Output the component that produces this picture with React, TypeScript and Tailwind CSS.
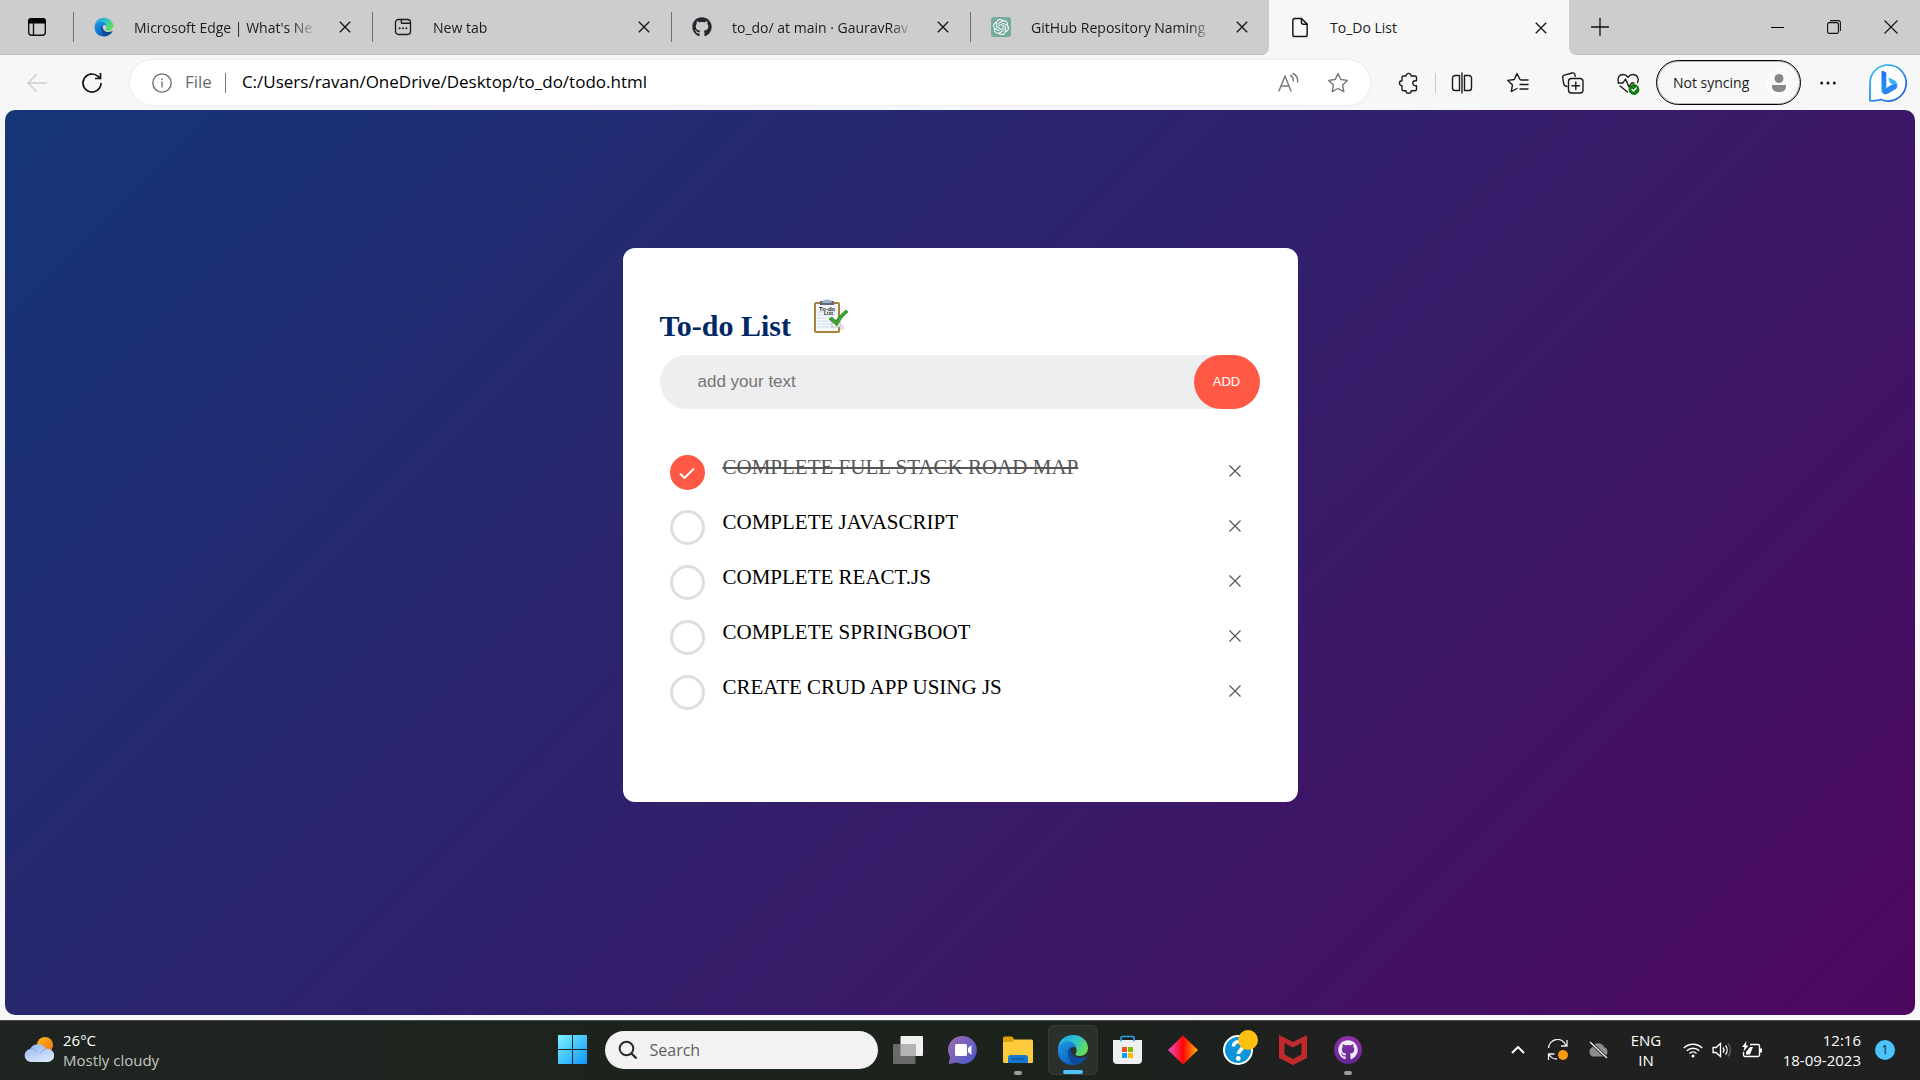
import React, { useState } from "react";
import { SiOpenai } from "react-icons/si";
import { FaGithub } from "react-icons/fa";

type IconProps = { className?: string };

function Stroke({ className = "size-6", children, w = 1.4 }: { className?: string; children: React.ReactNode; w?: number }) {
  return (
    <svg viewBox="0 0 24 24" fill="none" stroke="currentColor" strokeWidth={w} strokeLinecap="round" strokeLinejoin="round" className={className} aria-hidden="true">
      {children}
    </svg>
  );
}

function EdgeLogo({ className = "", id }: IconProps & { id: string }) {
  return (
    <svg viewBox="0 0 32 32" className={className} aria-hidden="true">
      <defs>
        <linearGradient id={id + "a"} x1="0" y1="0.2" x2="1" y2="0.7">
          <stop offset="0" stopColor="#1fa6e8" />
          <stop offset="0.5" stopColor="#2fc3c9" />
          <stop offset="1" stopColor="#6de04b" />
        </linearGradient>
        <linearGradient id={id + "b"} x1="0" y1="0" x2="0.6" y2="1">
          <stop offset="0" stopColor="#1f9ae6" />
          <stop offset="1" stopColor="#0b62c0" />
        </linearGradient>
      </defs>
      <path d="M1 14C2 6 8 1 16 1c9 0 15 6 15 13 0 5-4 8-8 8-3 0-5-1-4.500-2 1.500-2 1.500-4 .5-6C17 10 10 8 1 14Z" fill={`url(#${id}a)`} />
      <path d="M1 15c1-5 5-7.500 10-7.500 5 0 8 3.500 8.500 6.500-2-2-6-1-7.500 2-2 4 0 10 6 15C8 32 0 25 1 15Z" fill={`url(#${id}b)`} />
      <path d="M11 18c0-2 1-4 3-5-1 5 2 11 9 11 2.500 0 4.500-.6 6-1.500.6-.3 1 .1.700.700C27 28 22 31 17 31c-4-2-6-8-6-13Z" fill="#0c4a9b" />
    </svg>
  );
}

const ClosedX = ({ className = "size-3" }: IconProps) => (
  <svg viewBox="0 0 12 12" stroke="currentColor" strokeWidth="1.400" className={className} aria-hidden="true">
    <path d="M0.800 0.800 11.200 11.200M11.200 0.800 0.800 11.200" />
  </svg>
);

const tabs = [
  {
    title: "Microsoft Edge | What's Ne",
    icon: <EdgeLogo className="size-[22px]" id="tabedge" />,
  },
  {
    title: "New tab",
    icon: (
      <Stroke className="size-[22px]" w={1.600}>
        <rect x="3" y="3" width="18" height="18" rx="3.500" />
        <path d="M10 3v3.500a1 1 0 0 0 1 1h10" />
        <path d="M8 13.500h.01M12 13.500h.01M16 13.500h.01" strokeWidth="2.400" />
      </Stroke>
    ),
  },
  { title: "to_do/ at main · GauravRav", icon: <FaGithub className="size-[20px] text-[#24292f]" /> },
  {
    title: "GitHub Repository Naming",
    icon: (
      <span className="grid size-5 place-items-center rounded-[3px] bg-[#74aa9c] text-white">
        <SiOpenai className="size-4" />
      </span>
    ),
  },
];

function TabStrip() {
  return (
    <div className="flex h-[55px] bg-[#f7f7f7]">
      <div className="flex min-w-0 shrink rounded-br-lg border-b border-[#bdbdbd] bg-[#cdcdcd]">
        <button aria-label="Tab actions" className="flex w-[73px] shrink-0 items-center justify-center pl-px">
          <svg viewBox="0 0 20 20" className="size-5" aria-hidden="true">
            <rect x="1.700" y="1.700" width="16.600" height="16.600" rx="3" fill="none" stroke="#111" strokeWidth="1.400" />
            <path d="M1 6.500V4.500A3.500 3.500 0 0 1 4.500 1h11A3.500 3.500 0 0 1 19 4.500v2Z" fill="#000" />
            <path d="M6.500 6v12" stroke="#111" strokeWidth="1.400" />
          </svg>
        </button>
        {tabs.map((t) => (
          <div key={t.title} className="flex w-[299px] min-w-0 items-center">
            <span className="h-[30px] w-px shrink-0 bg-[#6f6f6f]" />
            <span className="ml-5 flex w-5 shrink-0 justify-center">{t.icon}</span>
            <span className="ml-5 w-[184px] overflow-hidden pt-px whitespace-nowrap [mask-image:linear-gradient(to_right,black_86%,transparent_99%)]">{t.title}</span>
            <button aria-label={"Close " + t.title} className="ml-[21px] shrink-0">
              <ClosedX />
            </button>
          </div>
        ))}
      </div>
      <div className="flex w-[300px] shrink-0 items-center bg-[#f7f7f7]">
        <svg viewBox="0 0 18 22" fill="none" stroke="#111" strokeWidth="1.500" className="ml-[22px] h-[21px] w-[18px]" aria-hidden="true">
          <path d="M3.500 1.500h7l6 6V18.500a2 2 0 0 1-2 2h-11a2 2 0 0 1-2-2v-15a2 2 0 0 1 2-2Z" />
          <path d="M10.500 1.500v4a2 2 0 0 0 2 2h4" />
        </svg>
        <span className="ml-[21px] w-[184px] pt-px">To_Do List</span>
        <button aria-label="Close To_Do List" className="ml-[21px]">
          <ClosedX />
        </button>
      </div>
      <div className="flex grow items-center rounded-bl-lg border-b border-[#bdbdbd] bg-[#cdcdcd]">
        <button aria-label="New tab" className="ml-[22px]">
          <svg viewBox="0 0 18 18" stroke="#111" strokeWidth="1.300" className="size-[18px]" aria-hidden="true">
            <path d="M9 0v18M0 9h18" />
          </svg>
        </button>
        <div className="mr-[22px] ml-auto flex items-center gap-[43px]">
          <button aria-label="Minimize">
            <span className="block h-px w-[13px] bg-black" />
          </button>
          <button aria-label="Restore">
            <svg viewBox="0 0 14 14" fill="none" stroke="#111" strokeWidth="1.100" className="size-[14px]" aria-hidden="true">
              <rect x="0.600" y="2.600" width="10.800" height="10.800" rx="1.500" />
              <path d="M3 .6h8.400a2 2 0 0 1 2 2V11" />
            </svg>
          </button>
          <button aria-label="Close window">
            <svg viewBox="0 0 14 14" stroke="#111" strokeWidth="1.100" className="size-[14px]" aria-hidden="true">
              <path d="M.5.5 13.500 13.500M13.500.5.5 13.500" />
            </svg>
          </button>
        </div>
      </div>
    </div>
  );
}

function Toolbar() {
  return (
    <div className="flex h-[55px] items-center bg-[#f7f7f7]">
      <button aria-label="Back" className="ml-[26px] text-[#cfcfcf]">
        <svg viewBox="0 0 22 20" fill="none" stroke="currentColor" strokeWidth="1.500" className="h-5 w-[22px]" aria-hidden="true">
          <path d="M21 10H2M10.500 1.500 2 10l8.500 8.500" />
        </svg>
      </button>
      <button aria-label="Refresh" className="ml-[33px]">
        <svg viewBox="0 0 22 22" fill="none" stroke="#111" strokeWidth="1.700" className="size-[22px]" aria-hidden="true">
          <path d="M20 11a9 9 0 1 1-3-6.700L19.500 6.500" />
          <path d="M19.500 1v5.500H14" />
        </svg>
      </button>
      <div className="ml-[27px] flex h-[45px] min-w-0 grow items-center rounded-full bg-white shadow-[0_0_3px_rgba(0,0,0,0.1)]">
        <svg viewBox="0 0 20 20" fill="none" stroke="#6b6b6b" strokeWidth="1.300" className="ml-[22px] size-5 shrink-0" aria-hidden="true">
          <circle cx="10" cy="10" r="9.200" />
          <path d="M10 8.500V14.500M10 5.300v1.600" />
        </svg>
        <span className="ml-[13px] text-[17px] text-[#6b6b6b]">File</span>
        <span className="ml-[13px] h-5 w-px bg-[#777]" />
        <input aria-label="Address" defaultValue="C:/Users/ravan/OneDrive/Desktop/to_do/todo.html" className="ml-4 min-w-0 grow bg-transparent text-[17px] text-black outline-none" />
        <button aria-label="Read aloud" className="text-[#757575]">
          <Stroke className="size-6">
            <path d="M3 20 9 5 15 20M5 15h8" />
            <path d="M14.500 4.500c2 1 3 3 2.800 5.500M17 2.500c3.500 1.700 5 4.800 4.600 8.500" />
          </Stroke>
        </button>
        <button aria-label="Favorite" className="mr-5 ml-[26px] text-[#757575]">
          <Stroke className="size-6">
            <path d="m12 2.500 2.800 6 6.500.9-4.700 4.600 1.200 6.600-5.800-3.100-5.800 3.100 1.200-6.600L2.700 9.400l6.500-.9Z" />
          </Stroke>
        </button>
      </div>
      <button aria-label="Extensions" className="ml-[26px]">
        <Stroke>
          <path d="M6 6.500A1.500 1.500 0 0 1 7.500 5H10a2.600 2.600 0 1 1 5.200 0h4A1.500 1.500 0 0 1 20.500 6.500v3.200h-1.200a2.500 2.500 0 0 0 0 5h1.200v3.500a1.500 1.500 0 0 1-1.500 1.500h-3.800a2.600 2.600 0 0 1-5.200 0H7.500A1.500 1.500 0 0 1 6 18.200v-3.500a2.500 2.500 0 1 1 0-5Z" />
        </Stroke>
      </button>
      <span className="ml-[15px] h-5 w-px bg-[#c9c9c9]" />
      <button aria-label="Split screen" className="ml-[14px]">
        <Stroke>
          <path d="M9.500 4.500H5A2.500 2.500 0 0 0 2.500 7v10A2.500 2.500 0 0 0 5 19.500h4.500M14.500 4.500H19A2.500 2.500 0 0 1 21.500 7v10a2.500 2.500 0 0 1-2.500 2.500h-4.500M12 2v20M9.500 4.500v15M14.500 4.500v15" />
        </Stroke>
      </button>
      <button aria-label="Favorites" className="ml-8">
        <Stroke>
          <path d="M14 8.500 11 2.500l-2.700 6-6.500.9 4.700 4.500L5.300 20.500l5.700-3M15 9h7M14 13.500h8M14 18h8" />
        </Stroke>
      </button>
      <button aria-label="Collections" className="ml-[31px]">
        <Stroke>
          <path d="M6 15.500 4.500 15c-1-.3-1.600-1-1.800-2L1.700 6.800C1.500 5.500 2 4.600 3.300 4.200L11 2c1.500-.4 2.500.2 2.900 1.600l.4 1.600" />
          <rect x="7.500" y="7.500" width="14.500" height="14.500" rx="3" />
          <path d="M14.800 11v7.500M11 14.800h7.500" />
        </Stroke>
      </button>
      <button aria-label="Browser essentials" className="ml-[31px]">
        <Stroke>
          <path d="M2.700 12C.5 8 3 3.500 7 3.500c2 0 3.700 1 5 2.700 1.300-1.700 3-2.700 5-2.700 4 0 6.500 4 4.500 8M4 15l7.500 6" />
          <path d="M2 12h5l2.500-4 3.500 8 2.500-4H18" />
          <circle cx="18" cy="18.500" r="4.700" fill="#107c10" stroke="#107c10" />
          <path d="m16 18.500 1.500 1.500 2.700-3" stroke="#fff" />
        </Stroke>
      </button>
      <button className="ml-4 flex h-[45px] shrink-0 items-center rounded-full border border-black pl-4 shadow-[inset_0_0_0_1px_rgba(0,0,0,0.25)]">
        <span className="w-[80px] text-left whitespace-nowrap">Not syncing</span>
        <span className="mr-[7px] ml-3 grid size-7 place-items-center rounded-full bg-[#fbfbfb]">
          <svg viewBox="0 0 16 18" className="h-[18px] w-4" fill="#888" aria-hidden="true">
            <circle cx="8" cy="4.500" r="4.500" />
            <path d="M1 11h14v2c0 3-3 5-7 5s-7-2-7-5Z" />
          </svg>
        </span>
      </button>
      <button aria-label="Settings and more" className="ml-[19px]">
        <svg viewBox="0 0 16 4" className="h-1 w-4" fill="#111" aria-hidden="true">
          <circle cx="1.700" cy="2" r="1.500" />
          <circle cx="8" cy="2" r="1.500" />
          <circle cx="14.300" cy="2" r="1.500" />
        </svg>
      </button>
      <button aria-label="Bing" className="mr-[13px] ml-[33px]">
        <svg viewBox="0 0 38 38" className="size-[38px]" aria-hidden="true">
          <defs>
            <linearGradient id="bingRing" x1="0" y1="0" x2="1" y2="1">
              <stop offset="0" stopColor="#1bc8f2" />
              <stop offset="1" stopColor="#1f4fe0" />
            </linearGradient>
            <linearGradient id="bingB" x1="0" y1="0" x2="0" y2="1">
              <stop offset="0" stopColor="#2d6df6" />
              <stop offset="1" stopColor="#1a9cf0" />
            </linearGradient>
          </defs>
          <path d="M19 1a18 18 0 1 1-7 34.500C8 36.500 4 37 1.500 37 .5 37 1 34 1 31V19A18 18 0 0 1 19 1Z" fill="#fff" stroke="url(#bingRing)" strokeWidth="1.700" />
          <path d="M12.500 7.500c0-.8.500-1 1.200-.7l2.600 1.300c.8.400 1 1 1 1.800V25l-3 4.500c-1.200-.8-1.800-2-1.800-3.500Z" fill="url(#bingB)" />
          <path d="M19.500 14.500c0-.6.400-.8 1-.6l4 1.800c3.400 1.500 4.300 4.500 3.700 7.500L24 20.500l-3-1.500Z" fill="#35b9f2" />
          <path d="M13.500 28.500c1 2 3.300 2.300 5.200 1.200l6.500-3.800c1.900-1 3-2.500 3.100-4.500-1.400-1.700-4-1.500-6-.3l-5.500 3.200Z" fill="#2a86f3" />
        </svg>
      </button>
    </div>
  );
}

const initialTasks = [
  { text: "COMPLETE FULL STACK ROAD MAP", done: true },
  { text: "COMPLETE JAVASCRIPT", done: false },
  { text: "COMPLETE REACT.JS", done: false },
  { text: "COMPLETE SPRINGBOOT", done: false },
  { text: "CREATE CRUD APP USING JS", done: false },
];

function Clipboard() {
  return (
    <svg viewBox="0 0 38 38" className="size-[38px]" aria-hidden="true">
      <path d="M28 33c2 0 5-1 6-3l-4-5Z" fill="#e3e3e3" />
      <rect x="3" y="4" width="26" height="31" rx="2" fill="#a9803f" />
      <path d="M5 6h22v27H5Z" fill="#f4f7fb" />
      <path d="M6 23h13M6 26h14M6 29h16M6 20h14M6 17h18M6 14h18" stroke="#c9d4e4" strokeWidth="0.800" />
      <path d="M9 3h14v4H9Z" fill="#5d6c7c" />
      <path d="M12 3c0-2 8-2 8 0l1 2H11Z" fill="#9fb0c0" />
      <text x="8" y="12.500" fontSize="6" fontWeight="bold" fontFamily="Liberation Sans, sans-serif" fill="#222">To-do</text>
      <text x="13" y="17" fontSize="5" fontWeight="bold" fontFamily="Liberation Sans, sans-serif" fill="#222">List</text>
      <rect x="21" y="22" width="8" height="7" fill="#fff" stroke="#aaa" strokeWidth="0.800" />
      <path d="m18 21 3-2 4 4c2-4 6-8 10-11l2 2c-5 4-8 8-11 14Z" fill="#3fa52f" stroke="#227a1b" strokeWidth="0.700" />
    </svg>
  );
}

function TodoPage() {
  const [tasks, setTasks] = useState(initialTasks);
  const [draft, setDraft] = useState("");
  const add = () => {
    if (draft.trim()) setTasks([...tasks, { text: draft.trim(), done: false }]);
    setDraft("");
  };
  return (
    <main className="mx-[5px] grow rounded-[10px] bg-[linear-gradient(135deg,#153677,#4e085f)] px-5 pt-[138px] pb-12 font-['Liberation_Serif',serif]">
      <section className="mx-auto max-w-[675px] rounded-xl bg-white pt-[50px] pr-[38px] pb-20 pl-[37px]">
        <h1 className="flex items-start text-3xl font-bold text-[#002765]">
          <span className="mt-[10px]">To-do List</span>
          <span className="ml-5">
            <Clipboard />
          </span>
        </h1>
        <form
          className="mt-[11px] flex h-[54px] rounded-full bg-[#edeef0] font-['Liberation_Sans',sans-serif]"
          onSubmit={(e) => {
            e.preventDefault();
            add();
          }}
        >
          <input
            aria-label="New task"
            placeholder="add your text"
            value={draft}
            onChange={(e) => setDraft(e.target.value)}
            className="min-w-0 grow bg-transparent pl-[38px] text-[17px] outline-none placeholder:text-[#757575]"
          />
          <button className="w-[66px] rounded-full bg-[#ff5945] text-[13px] text-white">ADD</button>
        </form>
        <ul className="mt-[38px]">
          {tasks.map((t, i) => (
            <li key={i} className="flex h-[55px] items-start pr-[19px] pl-[10px]">
              <label className="flex grow items-start gap-[18px]">
                <input
                  type="checkbox"
                  checked={t.done}
                  onChange={() => setTasks(tasks.map((x, j) => (j === i ? { ...x, done: !x.done } : x)))}
                  className="peer sr-only"
                />
                <span className="mt-2 grid size-[35px] shrink-0 place-items-center rounded-full border-[3px] border-[#dedede] text-transparent peer-checked:border-[#ff5945] peer-checked:bg-[#ff5945] peer-checked:text-white">
                  <svg viewBox="0 0 16 12" fill="none" stroke="currentColor" strokeWidth="2" className="h-3 w-4" aria-hidden="true">
                    <path d="M1 6.500 5.500 11 15 1.500" />
                  </svg>
                </span>
                <span className="mt-2 text-[21px] leading-6 text-black peer-checked:text-[#555] peer-checked:line-through peer-checked:decoration-2">{t.text}</span>
              </label>
              <button aria-label={"Delete " + t.text} className="mt-[18px] text-[#555]" onClick={() => setTasks(tasks.filter((_, j) => j !== i))}>
                <svg viewBox="0 0 12 12" stroke="currentColor" strokeWidth="1.200" className="size-3" aria-hidden="true">
                  <path d="M.5.5 11.500 11.500M11.500.5.5 11.500" />
                </svg>
              </button>
            </li>
          ))}
        </ul>
      </section>
    </main>
  );
}

function Slot({ label, children, active, running }: { label: string; children: React.ReactNode; active?: boolean; running?: boolean }) {
  return (
    <button
      aria-label={label}
      className={
        active
          ? "relative grid h-[50px] w-[50px] place-items-center rounded-md border border-[#353c36] bg-[#2a312c]"
          : "relative grid h-[50px] w-[50px] place-items-center"
      }
    >
      {children}
      {active && <span className="absolute bottom-0 h-1 w-5 rounded-full bg-[#4cc2ff]" />}
      {running && <span className="absolute bottom-0 h-1 w-2 rounded-full bg-[#9a9d9a]" />}
    </button>
  );
}

function Taskbar() {
  return (
    <footer className="grid h-[60px] grid-cols-[1fr_auto_1fr] items-center border-t border-[#4a4d4a] bg-[linear-gradient(90deg,#1f2420,#1b231c_50%,#202020_75%)] pb-[2px] text-white">
      <button className="ml-6 flex items-center gap-[9px] justify-self-start text-left">
        <svg viewBox="0 0 30 26" className="h-[26px] w-[30px]" aria-hidden="true">
          <defs>
            <linearGradient id="cloud" x1="0" y1="0" x2="0.500" y2="1">
              <stop offset="0" stopColor="#8fb4f3" />
              <stop offset="1" stopColor="#d5e3fb" />
            </linearGradient>
            <linearGradient id="sun" x1="0" y1="0" x2="1" y2="1">
              <stop offset="0" stopColor="#fbb81c" />
              <stop offset="1" stopColor="#f0720f" />
            </linearGradient>
          </defs>
          <circle cx="21" cy="8" r="8" fill="url(#sun)" />
          <path d="M7 25a6.500 6.500 0 0 1-1-12.900A9 9 0 0 1 22 12a6.600 6.600 0 1 1 1.500 13Z" fill="url(#cloud)" />
          <path d="M6 12.100c3-.6 6 .7 7.500 3.400M22 12c-3 .3-5.500 2.500-6 5" stroke="#7da3ea" strokeWidth="0.800" fill="none" />
        </svg>
        <span className="text-[15px] leading-5">
          26°C
          <br />
          <span className="text-[#c6c6c4]">Mostly cloudy</span>
        </span>
      </button>

      <div className="flex items-center gap-[5px]">
        <Slot label="Start">
          <svg viewBox="0 0 29 29" className="size-[29px]" aria-hidden="true">
            <defs>
              <linearGradient id="win" gradientUnits="userSpaceOnUse" x1="0" y1="0" x2="29" y2="29">
                <stop offset="0" stopColor="#7df3ff" />
                <stop offset="1" stopColor="#0d94fa" />
              </linearGradient>
            </defs>
            <path d="M0 0h14v14H0ZM15 0h14v14H15ZM0 15h14v14H0ZM15 15h14v14H15Z" fill="url(#win)" />
          </svg>
        </Slot>
        <label className="ml-[2px] flex h-[38px] w-[273px] items-center rounded-full bg-[#f2f2f2] text-[#2b2b2b]">
          <svg viewBox="0 0 20 20" fill="none" stroke="#2b2b2b" strokeWidth="2" className="ml-[13px] size-5" aria-hidden="true">
            <circle cx="8.500" cy="8.500" r="6.800" />
            <path d="m13.500 13.500 5 5" strokeWidth="2.400" />
          </svg>
          <input aria-label="Search" placeholder="Search" className="ml-3 w-[200px] bg-transparent text-base outline-none placeholder:text-[#606060]" />
        </label>
        <Slot label="Task view">
          <svg viewBox="0 0 30 28" className="h-7 w-[30px]" aria-hidden="true">
            <rect x="7.500" width="22.500" height="20" rx="1" fill="#f0f0f0" />
            <rect y="8" width="22.500" height="20" rx="1" fill="#6a6a6a" />
            <rect x="7.500" y="8" width="15" height="12" fill="#b4b4b4" />
          </svg>
        </Slot>
        <Slot label="Chat">
          <svg viewBox="0 0 30 30" className="size-[30px]" aria-hidden="true">
            <defs>
              <linearGradient id="chat" x1="0" y1="0.400" x2="0.800" y2="1">
                <stop offset="0" stopColor="#8f6bb5" />
                <stop offset="1" stopColor="#5059c9" />
              </linearGradient>
            </defs>
            <path d="M15 1a14 14 0 1 1-6.500 26.500L1.500 29c-.6 0-.8-.4-.6-1L2 22A14 14 0 0 1 15 1Z" fill="url(#chat)" />
            <rect x="7" y="9" width="12" height="12" rx="1.500" fill="#fff" />
            <path d="m20 13 3.500-3v10L20 17Z" fill="#fff" />
          </svg>
        </Slot>
        <Slot label="File Explorer" running>
          <svg viewBox="0 0 30 27" className="h-[27px] w-[30px]" aria-hidden="true">
            <path d="M0 2a1.500 1.500 0 0 1 1.500-1.500H9L12 4v6H0Z" fill="#e2a104" />
            <path d="M0 6h9l3-2.500h16.500A1.500 1.500 0 0 1 30 5v20.500a1.500 1.500 0 0 1-1.500 1.500H1.500A1.500 1.500 0 0 1 0 25.500Z" fill="#fccb3e" />
            <path d="M5 27v-5a3 3 0 0 1 3-3h14a3 3 0 0 1 3 3v5Z" fill="#1478cf" />
            <path d="M9 23h12" stroke="#0a4d8f" strokeWidth="1.200" />
          </svg>
        </Slot>
        <Slot label="Microsoft Edge" active>
          <EdgeLogo className="size-8" id="taskedge" />
        </Slot>
        <Slot label="Microsoft Store">
          <svg viewBox="0 0 29 30" className="h-[30px] w-[29px]" aria-hidden="true">
            <path d="M0 5h29v20a4 4 0 0 1-4 4H4a4 4 0 0 1-4-4Z" fill="#f0f0f0" />
            <path d="M8 6.500V3a1.500 1.500 0 0 1 1.500-1.500h10A1.500 1.500 0 0 1 21 3v3.500" fill="none" stroke="#27a9e8" strokeWidth="1.600" />
            <path d="M9 12h5v5H9Z" fill="#f25022" />
            <path d="M15 12h5v5h-5Z" fill="#7fba00" />
            <path d="M9 18h5v5H9Z" fill="#00a4ef" />
            <path d="M15 18h5v5h-5Z" fill="#ffb900" />
          </svg>
        </Slot>
        <Slot label="Diamond">
          <svg viewBox="0 0 30 30" className="size-[30px]" aria-hidden="true">
            <defs>
              <linearGradient id="dia">
                <stop offset="0" stopColor="#f04fd0" />
                <stop offset="0.500" stopColor="#ff0505" />
                <stop offset="1" stopColor="#ffb400" />
              </linearGradient>
            </defs>
            <path d="m15 .5 15 14.500-15 14.500L0 15Z" fill="url(#dia)" />
          </svg>
        </Slot>
        <Slot label="Get Help">
          <svg viewBox="0 0 40 40" className="size-10" aria-hidden="true">
            <circle cx="20" cy="20" r="14" fill="#0c95d8" stroke="#fff" strokeWidth="2" />
            <path d="M15.500 16.500c0-3 2-4.700 4.700-4.700 3 0 4.700 1.800 4.700 4.200 0 3.700-4.500 4-4.500 8" fill="none" stroke="#fff" strokeWidth="3.600" />
            <circle cx="20.300" cy="28.500" r="2.400" fill="#fff" />
            <circle cx="30" cy="10" r="10" fill="#ffbf10" />
          </svg>
        </Slot>
        <Slot label="McAfee">
          <svg viewBox="0 0 28 30" className="h-[30px] w-7" aria-hidden="true">
            <path fillRule="evenodd" d="M0 0 14 7 28 0V23L14 30 0 23ZM5.500 8v11.500l8.500 4.500 8.500-4.500V8L14 12.500Z" fill="#c02a2c" />
          </svg>
        </Slot>
        <Slot label="GitHub Desktop" running>
          <span className="grid size-7 place-items-center rounded-full bg-[linear-gradient(#8d30ae,#61298f)]">
            <FaGithub className="size-5 text-[#f3eaf7]" />
          </span>
        </Slot>
      </div>

      <div className="mr-[25px] flex items-center justify-self-end text-[15px] leading-5">
        <button aria-label="Show hidden icons">
          <svg viewBox="0 0 14 8" fill="none" stroke="#fff" strokeWidth="2" className="h-2 w-[14px]" aria-hidden="true">
            <path d="m1 7 6-6 6 6" />
          </svg>
        </button>
        <svg viewBox="0 0 22 22" fill="none" stroke="#eee" strokeWidth="1.300" className="ml-[22px] size-[22px]" aria-hidden="true">
          <path d="M1.500 9A9 9 0 0 1 19 6.500M20 1v6h-6M10 20a9 9 0 0 1-8-4.500M1.500 21v-6h6" />
          <circle cx="16" cy="16" r="5" fill="#ff9a0a" stroke="none" />
        </svg>
        <svg viewBox="0 0 22 18" className="ml-[18px] h-[18px] w-[22px]" aria-hidden="true">
          <path d="M5.500 15.500a5 5 0 0 1-.5-9A6.500 6.500 0 0 1 17 6a5 5 0 0 1 0 9.500Z" fill="#8d8d8d" />
          <path d="M3 1l17 16" stroke="#202020" strokeWidth="3" />
          <path d="M3 1l17 16" stroke="#eee" strokeWidth="1.300" />
        </svg>
        <span className="ml-5 w-[34px] text-center leading-5">
          ENG
          <br />
          IN
        </span>
        <svg viewBox="0 0 20 16" fill="none" stroke="#fff" strokeWidth="1.500" className="ml-5 h-4 w-5" aria-hidden="true">
          <path d="M.8 6a13 13 0 0 1 18.400 0M3.800 8.800a9 9 0 0 1 12.400 0M6.500 11.500a5 5 0 0 1 7 0" />
          <circle cx="10" cy="14" r="1.500" fill="#fff" stroke="none" />
        </svg>
        <svg viewBox="0 0 20 16" fill="none" stroke="#fff" strokeWidth="1.300" className="ml-[9px] h-4 w-5" aria-hidden="true">
          <path d="M1 5.500h3L8.500 1.500v13L4 10.500H1ZM11 5.500a4 4 0 0 1 0 5M13.500 3.500a7 7 0 0 1 0 9" />
          <path d="M16 1.500a10 10 0 0 1 0 13" stroke="#666" />
        </svg>
        <svg viewBox="0 0 21 17" fill="none" stroke="#fff" strokeWidth="1.400" className="ml-[10px] h-[17px] w-[21px]" aria-hidden="true">
          <path d="M8 3.500h8A1.500 1.500 0 0 1 17.500 5v9a1.500 1.500 0 0 1-1.500 1.500H3A1.500 1.500 0 0 1 1.500 14v-3" />
          <path d="M4 13.500V11l4-5h3l-3 7.500ZM18 7.500h2v4h-2Z" fill="#fff" stroke="none" />
          <path d="M4.500 0 0 6h2.500L1.500 10.500 6.500 4.500H4Z" fill="#fff" stroke="none" />
        </svg>
        <span className="ml-[14px] w-[84px] text-right leading-5 whitespace-nowrap">
          12:16
          <br />
          18-09-2023
        </span>
        <span className="ml-[14px] grid size-5 place-items-center rounded-full bg-[#4cc2ff] text-xs text-[#1a1a1a]">1</span>
      </div>
    </footer>
  );
}

export default function App() {
  return (
    <div className="flex min-h-screen flex-col bg-[#f7f7f7] font-['Open_Sans',sans-serif] text-sm text-[#1b1b1b]">
      <header>
        <TabStrip />
        <Toolbar />
      </header>
      <TodoPage />
      <div className="mt-[5px]">
        <Taskbar />
      </div>
    </div>
  );
}
